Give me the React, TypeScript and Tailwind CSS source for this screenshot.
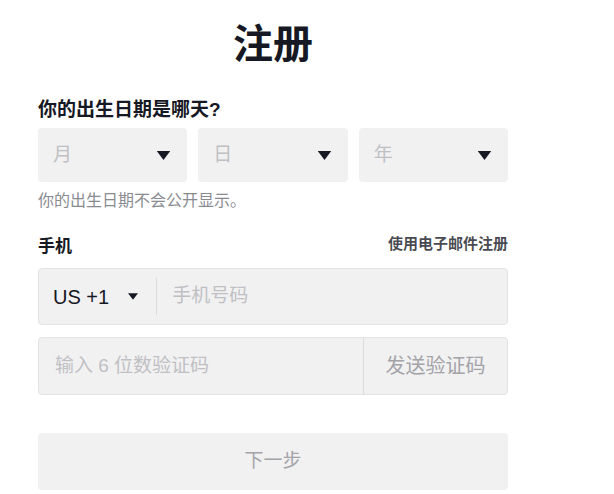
const font = { fontFamily: '"Liberation Sans", "Noto Sans CJK SC", sans-serif' };

function Caret({ className = "" }: { className?: string }) {
  return (
    <svg className={className} viewBox="0 0 12 8" width="12" height="8">
      <path d="M0 0 H12 L6 8 Z" fill="#161823" />
    </svg>
  );
}

function DateSelect({ label }: { label: string }) {
  return (
    <div className="flex-1 h-[54px] rounded bg-[#f1f1f2] flex items-center justify-between pl-[15px] pr-[16px]">
      <span className="text-[19px] text-[#c0c0c4]">{label}</span>
      <Caret className="w-[15px] h-[9px]" />
    </div>
  );
}

export default function App() {
  return (
    <div className="bg-white w-[614px] h-[494px] overflow-hidden" style={font}>
      <div className="ml-[38px] w-[470px] flex flex-col">
        <h1 className="text-center text-[40px] font-bold text-[#161823] leading-none mt-[24px]">注册</h1>

        <div className="mt-[34px] text-[19px] font-bold text-[#161823] leading-[24px]">你的出生日期是哪天?</div>
        <div className="mt-[6px] flex gap-[11px]">
          <DateSelect label="月" />
          <DateSelect label="日" />
          <DateSelect label="年" />
        </div>
        <div className="mt-[8px] text-[16px] text-[#8a8b91] leading-[22px]">你的出生日期不会公开显示。</div>

        <div className="mt-[24px] h-[22px] flex items-start justify-between">
          <span className="text-[17px] font-bold text-[#161823] leading-[22px]">手机</span>
          <span className="text-[15px] font-bold text-[#161823]/80 leading-[16px]">使用电子邮件注册</span>
        </div>

        <div className="mt-[10px] h-[57px] rounded border border-[#e3e3e4] bg-[#f1f1f2] flex items-center">
          <div className="flex items-center pl-[14px] pr-[18px] h-full">
            <span className="text-[20px] text-[#161823]">US +1</span>
            <Caret className="ml-[19px] w-[10px] h-[7px]" />
          </div>
          <div className="w-px h-[37px] bg-[#dcdcde]" />
          <span className="ml-[15px] text-[19px] text-[#c0c0c4]">手机号码</span>
        </div>

        <div className="mt-[12px] h-[58px] rounded border border-[#e3e3e4] bg-[#f1f1f2] flex">
          <div className="flex-1 flex items-center pl-[16px] text-[19px] text-[#c0c0c4]">输入 6 位数验证码</div>
          <div className="w-[144px] border-l border-[#dcdcde] flex items-center justify-center text-[20px] text-[#a3a3a8]">发送验证码</div>
        </div>

        <button className="mt-[38px] h-[57px] rounded bg-[#f1f1f2] text-[19px] text-[#a3a3a8]">下一步</button>
      </div>
    </div>
  );
}
